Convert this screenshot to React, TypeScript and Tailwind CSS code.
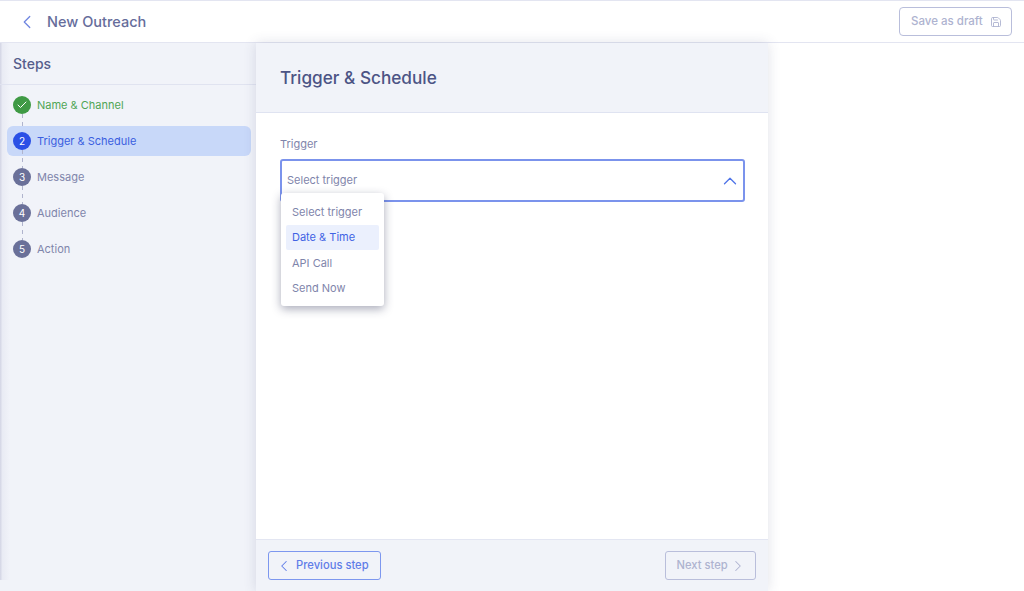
import React from 'react';
import { ChevronLeft, ChevronRight, ChevronUp, Check, Save } from 'lucide-react';

const steps = [
  { n: 2, label: 'Trigger & Schedule', state: 'active' },
  { n: 3, label: 'Message', state: 'todo' },
  { n: 4, label: 'Audience', state: 'todo' },
  { n: 5, label: 'Action', state: 'todo' },
];

const options = ['Select trigger', 'Date & Time', 'API Call', 'Send Now'];

const Connector = () => (
  <div className="absolute left-[14.5px] top-[24px] h-[18px] w-[1.5px] bg-[repeating-linear-gradient(to_bottom,#b0b4cd_0,#b0b4cd_4px,transparent_4px,transparent_8px)]" />
);

const App: React.FC = () => {
  return (
    <div className="h-[591px] w-[1024px] overflow-hidden bg-white font-['Inter',sans-serif] flex flex-col">
      {/* Top bar */}
      <div className="h-[43px] shrink-0 border-t border-b border-[#e3e5f1] flex items-center justify-between pl-[16px] pr-[12px]">
        <div className="flex items-center gap-[9px] pt-[1px]">
          <ChevronLeft className="w-[22px] h-[22px] text-[#6f86e0]" strokeWidth={1.4} />
          <span className="text-[14.5px] font-medium text-[#666d9b]">New Outreach</span>
        </div>
        <button className="h-[29px] w-[113px] rounded-[4px] border border-[#b9bedb] flex items-center pl-[11px] pt-[1px] gap-[7px] text-[11.5px] font-medium text-[#aeb3d0]">
          <span>Save as draft</span>
          <Save className="w-[12px] h-[12px]" strokeWidth={1.8} />
        </button>
      </div>

      <div className="flex-1 flex min-h-0">
        {/* Steps sidebar */}
        <div className="relative w-[256px] shrink-0 bg-[#f1f3f9]">
          <div className="absolute left-0 top-0 bottom-[11px] w-[10px] bg-[linear-gradient(to_right,#d2d4e4,#e9ebf4_25%,#f1f3f9)]" />
          <div className="relative h-[42px] border-b border-[#e0e3f0] flex items-center pl-[13px] text-[14px] font-medium text-[#565e8c]">
            Steps
          </div>
          <div className="relative pt-[5px] pl-[7px] pr-[5px] pb-[6px] flex flex-col gap-[6px]">
            <div className="relative h-[30px] flex items-center pl-[6px] gap-[6px]">
              <div className="w-[18px] h-[18px] rounded-full bg-[#3f9a45] flex items-center justify-center">
                <Check className="w-[12px] h-[12px] text-white" strokeWidth={2} />
              </div>
              <span className="text-[11px] text-[#4fa555]">Name &amp; Channel</span>
              <Connector />
            </div>
            {steps.map((step, i) => (
              <div
                key={step.n}
                className={`relative h-[30px] flex items-center pl-[6px] gap-[6px] rounded-[6px] ${step.state === 'active' ? 'bg-[#c8d8f9]' : ''}`}
              >
                <div className={`w-[18px] h-[18px] rounded-full flex items-center justify-center text-[10px] text-white ${step.state === 'active' ? 'bg-[#2a50e6]' : 'bg-[#6a7099]'}`}>
                  {step.n}
                </div>
                <span className={`text-[11px] ${step.state === 'active' ? 'text-[#3a5ee0]' : 'text-[#7f85ab]'}`}>{step.label}</span>
                {i < steps.length - 1 && <Connector />}
              </div>
            ))}
          </div>
        </div>

        {/* Main panel */}
        <div className="relative w-[512px] shrink-0 flex flex-col bg-white shadow-[0_0_12px_rgba(60,66,110,0.16)]">
          <div className="h-[70px] shrink-0 bg-[#f1f3f9] border-b border-[#dfe3f1] flex items-center pl-[24px] text-[17.2px] font-medium text-[#4c5485]">
            Trigger &amp; Schedule
          </div>
          <div className="flex-1 px-[24px] pt-[24px]">
            <div className="text-[11px] text-[#7f85ab] leading-[14px] mb-[8px]">Trigger</div>
            <div className="relative">
              <div className="h-[43px] w-[465px] rounded-[3px] border-2 border-[#7b93ec] flex items-center justify-between pl-[5px] pr-[2px] text-[11px] text-[#7f85ab]">
                <span>Select trigger</span>
                <ChevronUp className="w-[22px] h-[22px] text-[#4f74e8]" strokeWidth={1.4} />
              </div>
              <div className="absolute left-[1px] top-[34px] w-[103px] rounded-[3px] bg-white px-[5px] pt-[6px] pb-[5px] shadow-[0_3px_10px_rgba(40,44,80,0.4)]">
                {options.map((opt) => (
                  <div
                    key={opt}
                    className={`h-[25.5px] flex items-center pl-[6px] rounded-[2px] text-[11px] ${opt === 'Date & Time' ? 'bg-[#ebf0fd] text-[#3f63e4]' : 'text-[#7f85ab]'}`}
                  >
                    {opt}
                  </div>
                ))}
              </div>
            </div>
          </div>
          <div className="h-[52px] shrink-0 bg-[#f1f3f9] border-t border-[#e3e6f2] flex items-center justify-between px-[12px]">
            <button className="h-[29px] w-[113px] rounded-[3px] border border-[#7d97ef] flex items-center pl-[6px] gap-[3px] text-[11.2px] font-medium text-[#5f7de8]">
              <ChevronLeft className="w-[18px] h-[18px]" strokeWidth={1.4} />
              <span>Previous step</span>
            </button>
            <button className="h-[29px] w-[91px] rounded-[3px] border border-[#b9bedb] flex items-center pl-[10.5px] gap-[1.5px] text-[11.2px] font-medium text-[#aeb3d0]">
              <span>Next step</span>
              <ChevronRight className="w-[18px] h-[18px]" strokeWidth={1.4} />
            </button>
          </div>
        </div>
      </div>
    </div>
  );
};

export default App;
